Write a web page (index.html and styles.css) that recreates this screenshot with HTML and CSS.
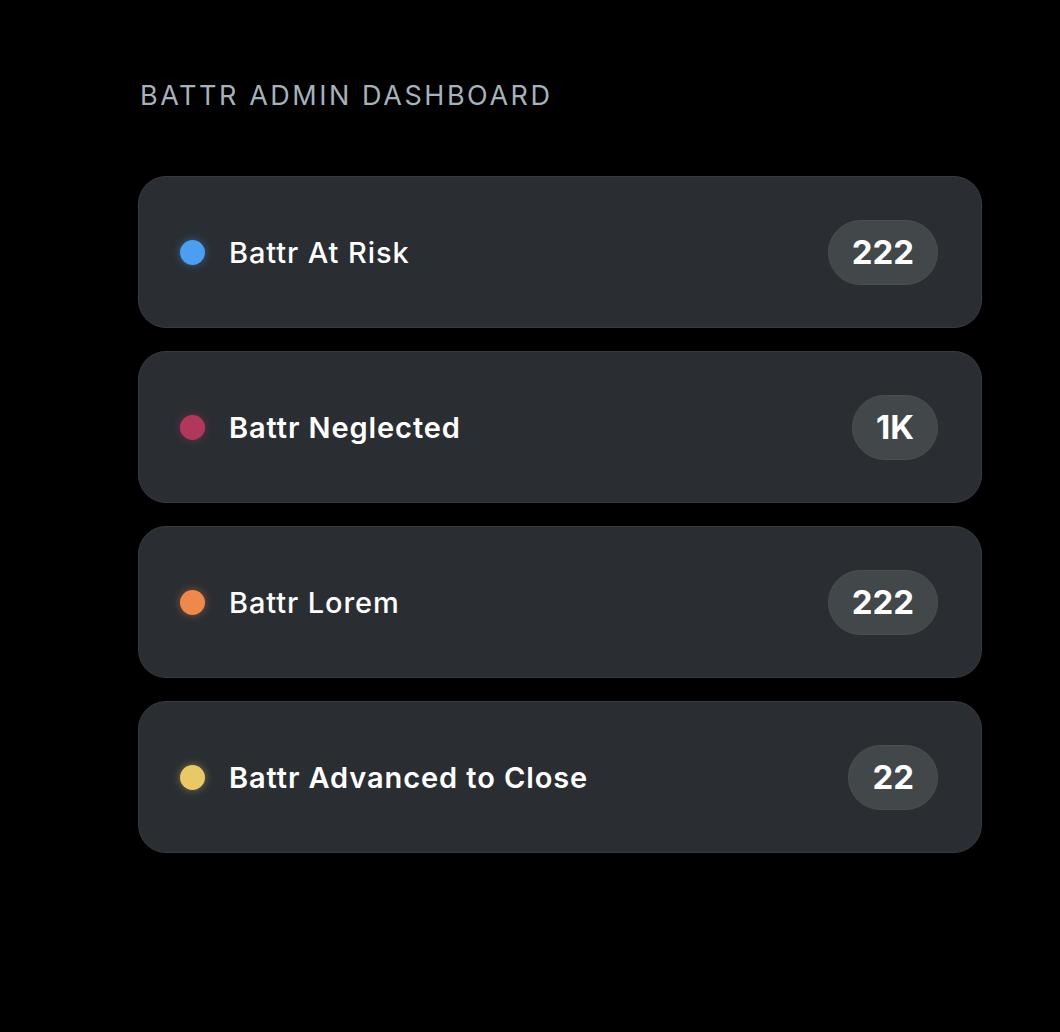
FILE: index.html
```html
<!DOCTYPE html>
<html lang="en">
<head>
    <meta charset="UTF-8">
    <meta name="viewport" content="width=device-width, initial-scale=1.0">
    <title>Battr Admin Dashboard</title>
    <link rel="stylesheet" href="styles.css">
</head>
<body>
    <div class="container">
        <h1 class="title">Battr Admin Dashboard</h1>

        <div class="list">
            <div class="card">
                <span class="dot blue"></span>
                <span class="label">Battr At Risk</span>
                <span class="count">222</span>
            </div>
            <div class="card">
                <span class="dot red"></span>
                <span class="label strong">Battr Neglected</span>
                <span class="count">1K</span>
            </div>
            <div class="card">
                <span class="dot orange"></span>
                <span class="label">Battr Lorem</span>
                <span class="count">222</span>
            </div>
            <div class="card">
                <span class="dot yellow"></span>
                <span class="label strong">Battr Advanced to Close</span>
                <span class="count">22</span>
            </div>
        </div>
    </div>
</body>
</html>
```

FILE: styles.css
```css
*{
    margin: 0;
    padding: 0;
    box-sizing: border-box;
    font-family: Inter, "Noto Sans", sans-serif;
}
body{
    background-color: black;
}
.container{
    padding: 78px 78px 0 138px;
}
.title{
    font-size: 27px;
    font-weight: 400;
    line-height: 36px;
    letter-spacing: 2.55px;
    text-transform: uppercase;
    color: #a6b2ba;
    margin-left: 2px;
}
.list{
    display: flex;
    flex-direction: column;
    gap: 23px;
    margin-top: 62px;
}
.card{
    display: flex;
    align-items: center;
    height: 152px;
    padding: 0 43px 0 41px;
    background-color: #2a2e32;
    border: 1px solid #363b3f;
    border-radius: 28px;
}
.dot{
    width: 25px;
    height: 25px;
    border-radius: 50%;
    flex-shrink: 0;
}
.blue{
    background-color: #4b9ef0;
    box-shadow: 0 0 8px rgba(75, 158, 240, 0.45);
}
.red{
    background-color: #b2385b;
    box-shadow: 0 0 8px rgba(178, 56, 91, 0.45);
}
.orange{
    background-color: #ef884b;
    box-shadow: 0 0 8px rgba(239, 136, 75, 0.45);
}
.yellow{
    background-color: #e9c866;
    box-shadow: 0 0 8px rgba(233, 200, 102, 0.45);
}
.label{
    margin-left: 24px;
    font-size: 29px;
    font-weight: 500;
    letter-spacing: 0.9px;
    color: white;
}
.strong{
    font-weight: 600;
}
.count{
    margin-left: auto;
    min-width: 82px;
    height: 65px;
    padding: 0 23px;
    display: flex;
    align-items: center;
    justify-content: center;
    background-color: #42474a;
    border: 1px solid #4a4f53;
    border-radius: 33px;
    font-size: 33px;
    font-weight: 700;
    color: white;
}
```
